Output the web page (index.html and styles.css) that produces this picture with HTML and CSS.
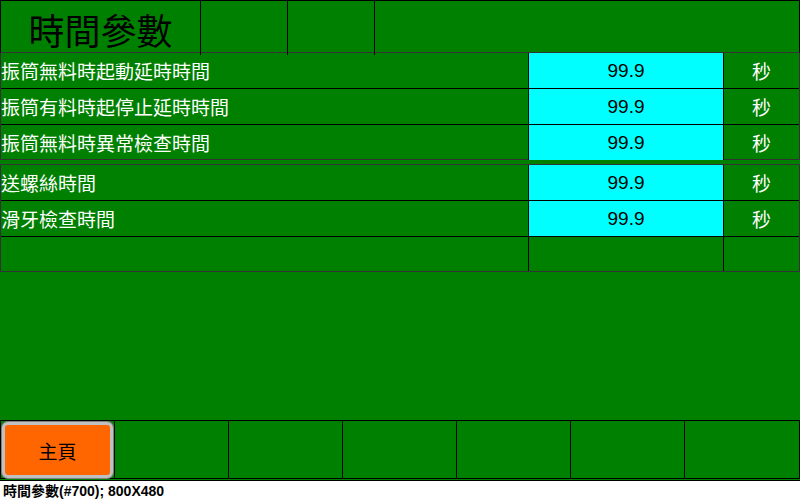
FILE: index.html
```html
<!DOCTYPE html>
<html lang="zh-Hant">
<head>
    <meta charset="UTF-8">
    <title>時間參數</title>
    <link rel="stylesheet" href="styles.css">
</head>
<body>
    <div class="screen">
        <div class="header">
            <div class="head-cell title">時間參數</div>
            <div class="head-cell"></div>
            <div class="head-cell"></div>
            <div class="head-cell last"></div>
        </div>

        <div class="group">
            <div class="row">
                <div class="label">振筒無料時起動延時時間</div>
                <div class="value">99.9</div>
                <div class="unit">秒</div>
            </div>
            <div class="row">
                <div class="label">振筒有料時起停止延時時間</div>
                <div class="value">99.9</div>
                <div class="unit">秒</div>
            </div>
            <div class="row">
                <div class="label">振筒無料時異常檢查時間</div>
                <div class="value">99.9</div>
                <div class="unit">秒</div>
            </div>
        </div>

        <div class="group second">
            <div class="row">
                <div class="label">送螺絲時間</div>
                <div class="value">99.9</div>
                <div class="unit">秒</div>
            </div>
            <div class="row">
                <div class="label">滑牙檢查時間</div>
                <div class="value">99.9</div>
                <div class="unit">秒</div>
            </div>
            <div class="row">
                <div class="label"></div>
                <div class="value empty"></div>
                <div class="unit"></div>
            </div>
        </div>

        <div class="spacer"></div>

        <div class="footer">
            <div class="foot-cell"><button class="home-btn">主頁</button></div>
            <div class="foot-cell"></div>
            <div class="foot-cell"></div>
            <div class="foot-cell"></div>
            <div class="foot-cell"></div>
            <div class="foot-cell"></div>
            <div class="foot-cell"></div>
        </div>
    </div>
    <div class="caption">時間參數(#700); 800X480</div>
</body>
</html>
```

FILE: styles.css
```css
* {
    box-sizing: border-box;
}

body {
    margin: 0;
    background: #ffffff;
    font-family: "Liberation Sans", "Noto Sans CJK TC", sans-serif;
}

.screen {
    width: 800px;
    height: 481px;
    background: #008000;
    border-bottom: 1px solid #000;
    display: flex;
    flex-direction: column;
}

.header {
    display: grid;
    grid-template-columns: 200px 87px 87px 1fr;
    height: 53px;
    border: 1px solid #000;
    border-bottom-color: #333;
}

.head-cell {
    border-right: 1px solid #000;
}

.head-cell.last {
    border-right: none;
}

.title {
    font-family: "Noto Sans CJK TC", sans-serif;
    font-size: 36px;
    line-height: 51px;
    padding-top: 3px;
    text-align: center;
    color: #000;
}

.group {
    border: 1px solid #333;
    border-top: none;
}

.group.second {
    margin-top: 4px;
    border-top: 1px solid #333;
}

.row {
    display: grid;
    grid-template-columns: 528px 195px 1fr;
    height: 36px;
    border-bottom: 1px solid #000;
}

.row:last-child {
    height: 34px;
    border-bottom: none;
}

.label {
    font-family: "Noto Sans CJK TC", sans-serif;
    color: #fff;
    font-size: 19px;
    line-height: 35px;
    border-right: 1px solid #000;
    white-space: nowrap;
}

.value {
    background: #00ffff;
    color: #000;
    font-size: 19px;
    line-height: 35px;
    text-align: center;
    border-right: 1px solid #000;
}

.value.empty {
    background: transparent;
}

.unit {
    font-family: "Noto Sans CJK TC", sans-serif;
    color: #fff;
    font-size: 19px;
    line-height: 35px;
    text-align: center;
}

.spacer {
    flex: 1;
}

.footer {
    display: grid;
    grid-template-columns: repeat(6, 114px) 1fr;
    height: 59px;
    border: 1px solid #000;
    margin-bottom: 1px;
}

.foot-cell {
    border-right: 1px solid #000;
    padding: 1px;
}

.foot-cell:last-child {
    border-right: none;
}

.home-btn {
    width: 111px;
    height: 56px;
    margin: 0;
    background: #ff6600;
    border: 3px solid #c0c0c0;
    border-radius: 6px;
    box-shadow: 0 0 0 1px #808080;
    font-family: "Noto Sans CJK TC", sans-serif;
    font-size: 19px;
    color: #000;
    padding: 0;
}

.caption {
    font-family: "Liberation Sans", "Noto Sans CJK TC", sans-serif;
    font-weight: bold;
    font-size: 14px;
    line-height: 18px;
    padding: 1px 0 0 3px;
    color: #000;
}
```
